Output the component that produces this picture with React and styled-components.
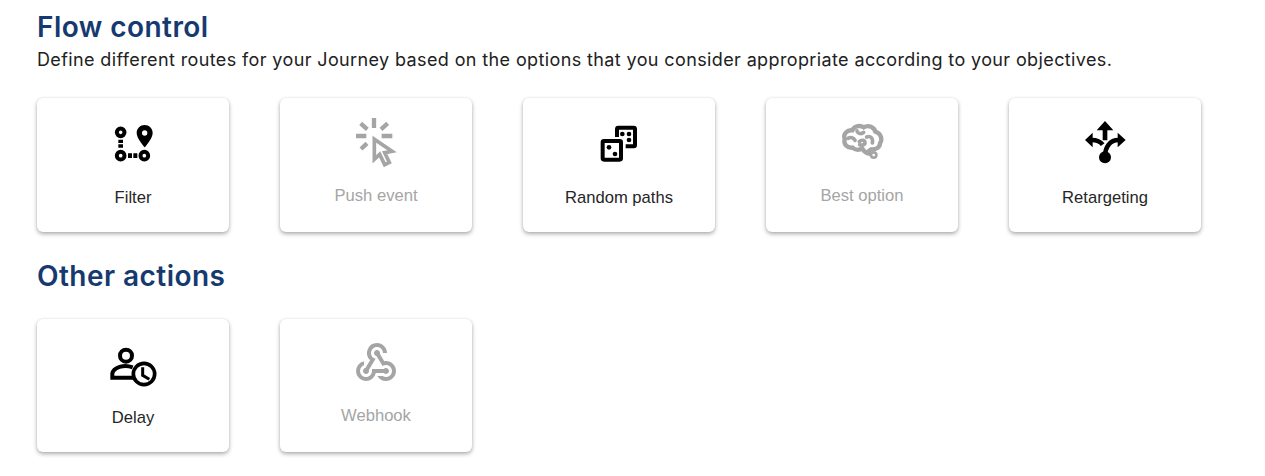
import React from "react";
import styled, { createGlobalStyle } from "styled-components";
import { MdWebhook } from "react-icons/md";

const Global = createGlobalStyle`
  html, body { margin: 0; background: #fff; }
`;

const Page = styled.main`
  box-sizing: border-box;
  min-height: 476px;
  padding: 10px 37px 0;
  font-family: Inter, "Noto Sans", sans-serif;
`;

const Title = styled.h2`
  margin: 0;
  font-size: 28px;
  line-height: 34px;
  font-weight: 600;
  letter-spacing: 0.45px;
  color: #163a70;
`;

const Intro = styled.p`
  margin: 3px 0 0;
  font-size: 18px;
  line-height: 26px;
  letter-spacing: 0.38px;
  white-space: nowrap;
  color: #212121;
`;

const CardRow = styled.div`
  display: flex;
  gap: 51px;
  margin-top: ${(p) => p.$top}px;
`;

const SectionTitle = styled(Title)`
  margin-top: 27px;
`;

const Card = styled.button`
  width: 192px;
  height: 133.6px;
  padding: 17px 0 0;
  border: 0;
  border-radius: 6px;
  background: #fff;
  box-shadow: 0 2px 4px rgba(0, 0, 0, 0.32), 0 0 2px rgba(0, 0, 0, 0.08);
  display: flex;
  flex-direction: column;
  align-items: center;
  color: ${(p) => (p.disabled ? "#a5a5a5" : "#000")};
`;

const IconSlot = styled.span`
  height: 55px;
  display: flex;
  align-items: center;
  justify-content: center;
`;

const Label = styled.span`
  margin-top: ${(p) => (p.$muted ? 16.3 : 18.3)}px;
  font-family: "Liberation Sans", Arial, sans-serif;
  font-size: 16.6px;
  line-height: 18px;
  color: ${(p) => (p.$muted ? "#a5a5a5" : "#262626")};
`;

const Art = ({ box, children }) => (
  <svg width="60" height="55" viewBox={`${box} 180 165`} fill="none" stroke="currentColor" strokeWidth="9">
    {children}
  </svg>
);

const FilterIcon = () => (
  <Art box="9 0">
    <circle cx="62" cy="52" r="11.5" strokeWidth="12" />
    <circle cx="62" cy="122" r="11.5" strokeWidth="12" />
    <circle cx="133" cy="122" r="11.5" strokeWidth="12" />
    <path d="M55 74h14v10H55zM55 88h14v10H55zM84 115h12v14H84zM100 115h12v14h-12z" fill="currentColor" stroke="none" />
    <path
      fillRule="evenodd"
      fill="currentColor"
      stroke="none"
      d="M134 30c-13 0-24 10-24 24 0 17 24 43 24 43s24-26 24-43c0-14-11-24-24-24zm0 16a8 8 0 1 1 0 16 8 8 0 0 1 0-16z"
    />
  </Art>
);

const PushIcon = () => (
  <Art box="3 15">
    <path strokeWidth="13" d="M87 24v30M33 78h31M110 78h32M47 40l20 18M128 40l-20 18M66 100l-18 17" />
    <path strokeWidth="11" strokeLinejoin="miter" d="M88 88v60l16-15 15 31 14-7-14-29 22-4z" />
  </Art>
);

const DiceIcon = () => (
  <Art box="-3 0">
    <rect x="38" y="78" width="55" height="56" rx="4" strokeWidth="12" />
    <path strokeWidth="12" d="M81 66V42a4 4 0 0 1 4-4h46a4 4 0 0 1 4 4v48a4 4 0 0 1-4 4h-24" />
    <g fill="currentColor" stroke="none">
      <circle cx="57" cy="97" r="7" />
      <circle cx="75" cy="117" r="7" />
      <circle cx="97" cy="57" r="7" />
      <circle cx="117" cy="57" r="7" />
      <circle cx="117" cy="75" r="7" />
    </g>
  </Art>
);

const BrainIcon = () => (
  <Art box="0 0">
    <path
      strokeWidth="13"
      strokeLinecap="round"
      d="M62 98C45 100 34 88 38 72 32 56 46 44 61 46 68 32 85 30 95 37c15-9 32 0 35 13 16 5 23 22 14 35 0 12-12 19-26 18l-8 5M62 98c8 9 22 8 28 1 5 10 14 16 24 18"
    />
    <path
      strokeWidth="11"
      strokeLinecap="round"
      d="M75 48c3 9 14 10 20 4M48 70c8-5 17-2 21 6M104 66c12-5 20 4 17 18M82 80c7-7 17-5 17 4 0 6-9 7-16 5"
    />
    <circle cx="125" cy="120" r="8" strokeWidth="8" />
  </Art>
);

const RetargetIcon = () => (
  <Art box="0 0">
    <path fill="currentColor" stroke="none" d="M90 18l25 28H65zM30 75l23-22v44zM152 75l-24-22v44z" />
    <path strokeWidth="14" d="M90 44v32M50 75c14 0 25 3 33 14M130 75c-24 0-40 20-40 50" />
    <circle cx="90" cy="127" r="18" fill="currentColor" stroke="none" />
  </Art>
);

const DelayIcon = () => (
  <Art box="9 -12">
    <circle cx="78" cy="47" r="18" strokeWidth="12" />
    <path strokeWidth="12" d="M98 82c-26-10-58 0-61 19v12h62" />
    <circle cx="132" cy="102" r="32" strokeWidth="11" fill="#fff" />
    <path strokeWidth="9" d="M128 82v24l20 12" />
  </Art>
);

const flow = [
  { name: "Filter", icon: <FilterIcon /> },
  { name: "Push event", icon: <PushIcon />, off: true },
  { name: "Random paths", icon: <DiceIcon /> },
  { name: "Best option", icon: <BrainIcon />, off: true },
  { name: "Retargeting", icon: <RetargetIcon /> },
];

const other = [
  { name: "Delay", icon: <DelayIcon /> },
  { name: "Webhook", icon: <MdWebhook size={48} />, off: true },
];

const Cards = ({ items, top }) => (
  <CardRow $top={top}>
    {items.map((it) => (
      <Card key={it.name} disabled={it.off}>
        <IconSlot>{it.icon}</IconSlot>
        <Label $muted={it.off}>{it.name}</Label>
      </Card>
    ))}
  </CardRow>
);

export default function App() {
  return (
    <Page>
      <Global />
      <Title>Flow control</Title>
      <Intro>
        Define different routes for your Journey based on the options that you consider appropriate according to your objectives.
      </Intro>
      <Cards items={flow} top={25.4} />
      <SectionTitle>Other actions</SectionTitle>
      <Cards items={other} top={25.6} />
    </Page>
  );
}
